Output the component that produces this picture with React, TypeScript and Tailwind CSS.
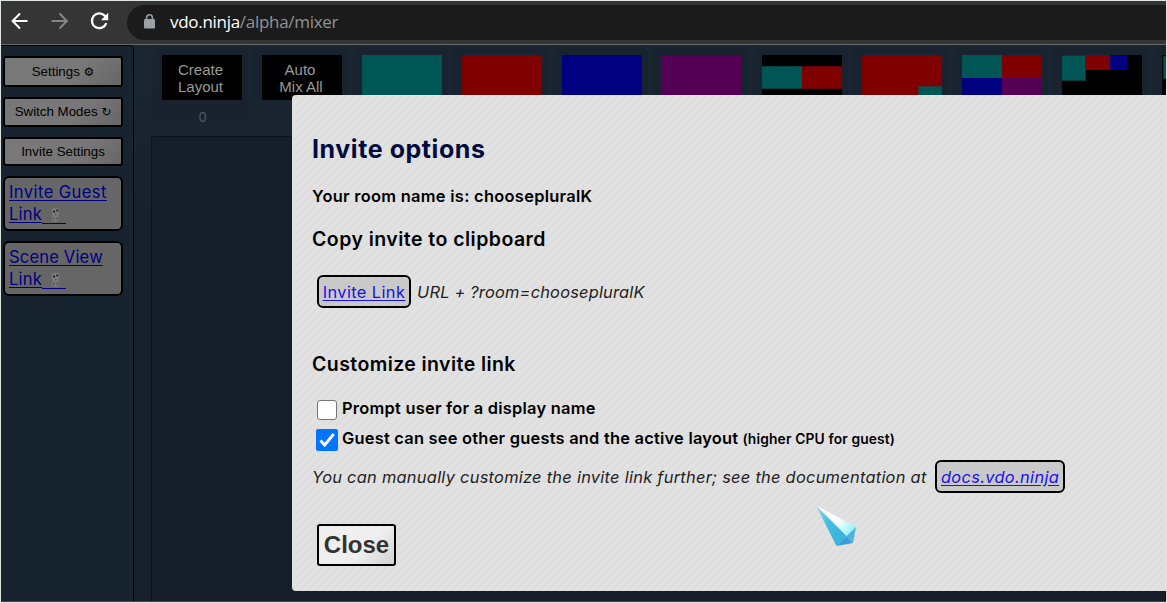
import type { ReactNode } from "react";

function BrowserBar() {
  return (
    <header className="flex h-[44px] shrink-0 items-center border-b border-[#686868] bg-[#353535]">
      <svg className="ml-2 h-6 w-6 shrink-0" viewBox="0 0 24 24" fill="none" stroke="#fff" strokeWidth="2" transform="translate(0 -2)">
        <path d="M18.500 12H3.500M11 4.500 3.600 12l7.400 7.500" />
      </svg>
      <svg className="ml-4 h-6 w-6 shrink-0" viewBox="0 0 24 24" fill="none" stroke="#858585" strokeWidth="2" transform="translate(0 -2)">
        <path d="M2.500 12H17.500M10.500 4.500 17.900 12l-7.400 7.500" />
      </svg>
      <svg className="ml-[14px] h-6 w-6 shrink-0" viewBox="0 0 24 24" fill="none" transform="translate(0 -2)">
        <path d="M19.300 14.200A7.400 7.400 0 1 1 17.600 6.600L19.500 8.500" stroke="#fff" strokeWidth="2.300" />
        <path d="M21.200 3.800V11.200H14z" fill="#fff" />
      </svg>
      <div className="-mt-px ml-4 flex h-[35px] flex-1 items-center rounded-l-full bg-[#1b1b1b] pl-[17px]">
        <svg className="-mt-px h-[15px] w-[11px] shrink-0" viewBox="0 0 11 15">
          <path d="M2.600 6V3.700a2.900 2.900 0 0 1 5.800 0V6" fill="none" stroke="#9aa0a6" strokeWidth="1.500" />
          <rect y="5" width="11" height="9.500" rx="1.300" fill="#9aa0a6" />
        </svg>
        <div className="-mt-px ml-[15px] font-['Open_Sans',sans-serif] text-[17px] leading-6 tracking-[-0.29px] text-[#8f9398]">
          <span className="text-white">vdo.ninja</span>/alpha/mixer
        </div>
      </div>
    </header>
  );
}

function SideButton({ children, className }: { children: ReactNode; className: string }) {
  return (
    <button className={`flex w-[120px] items-center justify-center rounded-[3px] border-2 border-black bg-[linear-gradient(135deg,#787878_60%,#666)] font-['Liberation_Sans','DejaVu_Sans',sans-serif] text-[13.33px] leading-4 whitespace-pre text-black ${className}`}>
      {children}
    </button>
  );
}

function Ghost() {
  return (
    <svg className="ml-[9px] inline-block h-4 w-[9px]" viewBox="0 0 9 16">
      <path d="M1.500 15V8L.5 4Q.5 1 4.500 1T8.500 4L7.500 8V15L6 13.500 4.500 15.500 3 13.500z" fill="#7c7c7c" />
      <circle cx="3" cy="4.500" r="1.100" fill="#181818" />
      <circle cx="6.300" cy="3.500" r="1.100" fill="#181818" />
      <path d="M4.700 6.500v2M3 10v3M6 10v3" stroke="#4c4c4c" />
    </svg>
  );
}

function SideLink({ first, className }: { first: string; className: string }) {
  return (
    <a className={`block h-[55px] w-[120px] rounded-[6px] border-2 border-black bg-[#666] pt-[3px] pl-1 font-['Inter',sans-serif] text-[16.6px] leading-[22px] whitespace-nowrap text-[#000084] underline underline-offset-2 ${className}`}>
      {first}
      <br />
      <span className="tracking-[0.2px]">Link</span>
      <span className="inline-flex border-b border-[#000084] pr-[6px] align-[-3px]"><Ghost /></span>
    </a>
  );
}

function Slot({ children, below }: { children?: ReactNode; below?: string }) {
  return (
    <div className="flex w-[95px] shrink-0 flex-col rounded-[7px] bg-[#18232f] px-[9px] pt-2">
      <div className="h-[45px] w-20 shrink-0 overflow-hidden bg-black text-center font-['Liberation_Sans',sans-serif] text-[15px] leading-[17px] text-[#999]">
        {children}
      </div>
      {below && <div className="mt-[9px] pl-1 text-center font-['Inter',sans-serif] text-[13px] leading-4 text-[#565b60]">{below}</div>}
    </div>
  );
}

function Layouts() {
  return (
    <div className="flex h-20 items-start gap-[5px] overflow-hidden pt-[2px] pl-[19px]">
      <Slot below="0"><div className="pt-[6px] pr-[3px]">Create<br />Layout</div></Slot>
      <Slot><div className="pt-[6px]"><span className="-ml-1">Auto</span><br /><span className="ml-[-2px]">Mix All</span></div></Slot>
      <Slot><div className="h-full bg-[#005555]" /></Slot>
      <Slot><div className="h-full bg-[#800000]" /></Slot>
      <Slot><div className="h-full bg-[#000080]" /></Slot>
      <Slot><div className="h-full bg-[#550055]" /></Slot>
      <Slot>
        <div className="flex pt-[11px]">
          <div className="h-[23px] w-10 border-y border-[#004040] bg-[#005555]" />
          <div className="h-[23px] w-10 border-y border-[#600000] bg-[#800000]" />
        </div>
      </Slot>
      <Slot>
        <div className="flex h-full items-end justify-end bg-[#800000]">
          <div className="h-[14px] w-6 border-t border-l border-[#303535] bg-[#005555]" />
        </div>
      </Slot>
      <Slot>
        <div className="grid h-full grid-cols-2 grid-rows-2">
          <div className="bg-[#005555]" /><div className="bg-[#800000]" />
          <div className="bg-[#000080]" /><div className="bg-[#550055]" />
        </div>
      </Slot>
      <Slot>
        <div className="flex items-start">
          <div className="h-[26px] w-6 border border-l-0 border-[#003c3c] bg-[#005555]" />
          <div className="h-[15px] w-6 bg-[#800000]" />
          <div className="h-[15px] w-[17px] bg-[#000080]" />
        </div>
      </Slot>
      <Slot><div className="mt-px ml-px h-[23px] w-6 border border-[#003c3c] bg-[#005555]" /></Slot>
    </div>
  );
}

function LinkBox({ children, className }: { children: ReactNode; className: string }) {
  return (
    <a className={`flex h-[33px] items-center justify-center rounded-[6px] border-2 border-black bg-[#c9c9c9] text-[#1a10e8] underline underline-offset-2 ${className}`}>
      {children}
    </a>
  );
}

function InviteDialog() {
  return (
    <section className="absolute top-[94px] right-0 left-[291px] h-[496px] rounded-l-[4px] bg-[repeating-linear-gradient(135deg,#e2e2e2_0px,#e2e2e2_2.83px,#dedede_2.83px,#dedede_5.66px)] pt-[38px] pl-5 font-['Inter',sans-serif] text-[16.4px] leading-6 whitespace-nowrap text-black">
      <h2 className="text-[25px] leading-8 font-bold tracking-[0.57px] text-[#000b3e]">Invite options</h2>
      <p className="mt-[19px] font-semibold tracking-[0.3px]">Your room name is: choosepluralK</p>
      <h3 className="mt-[19px] text-[19.5px] font-semibold tracking-[0.46px]">Copy invite to clipboard</h3>
      <div className="mt-6 ml-[5px] flex items-center">
        <LinkBox className="w-[94px] tracking-[0.4px]">Invite Link</LinkBox>
        <span className="ml-[6px] tracking-[0.2px] text-[#222] italic">URL + ?room=choosepluralK</span>
      </div>
      <h3 className="mt-11 text-[19.5px] font-semibold tracking-[0.42px]">Customize invite link</h3>
      <div className="mt-5 flex h-6 items-center font-semibold tracking-[0.26px]">
        <span className="mt-[3px] ml-[5px] h-5 w-5 rounded-[3px] border border-[#767676] bg-white" />
        <span className="ml-[5px]">Prompt user for a display name</span>
      </div>
      <div className="mt-[6px] flex h-6 items-center font-semibold tracking-[0.24px]">
        <svg className="mt-1 ml-1 h-[22px] w-[22px]" viewBox="0 0 22 22">
          <rect width="22" height="22" rx="2" fill="#0075ff" />
          <path d="m4.500 11.500 4.200 4.500 9-11" fill="none" stroke="#fff" strokeWidth="2.900" />
        </svg>
        <span className="ml-1">Guest can see other guests and the active layout</span>
        <span className="mt-px ml-1 text-[13.8px] tracking-[0.15px]">(higher CPU for guest)</span>
      </div>
      <div className="mt-[10px] flex items-center text-[#222] italic">
        <span className="w-[623px] tracking-[0.27px]">You can manually customize the invite link further; see the documentation at</span>
        <LinkBox className="w-[130px] tracking-[0.34px]">docs.vdo.ninja</LinkBox>
      </div>
      <button className="mt-[31px] ml-[5px] block h-[42px] w-[79px] rounded-[3px] border-2 border-black bg-[linear-gradient(135deg,#efefef_60%,#d2d2d2)] font-['Liberation_Sans',sans-serif] text-[24px] leading-[38px] font-bold text-[#333]">
        Close
      </button>
    </section>
  );
}

function Pointer() {
  return (
    <svg className="absolute top-[504px] left-[814px] h-[42px] w-[42px]" viewBox="0 0 42 42">
      <defs>
        <linearGradient id="lit" x1="0.300" y1="0.500" x2="1" y2="0.800"><stop offset="0.300" stopColor="#fff" /><stop offset="1" stopColor="#7ff5f5" /></linearGradient>
        <linearGradient id="shade" x1="0" y1="0" x2="0.500" y2="1"><stop offset="0" stopColor="#a5d8df" /><stop offset="0.500" stopColor="#45bce0" /><stop offset="1" stopColor="#3ab4df" /></linearGradient>
      </defs>
      <path d="M1 .5 41 22 31.500 31z" fill="url(#lit)" />
      <path d="M1 .5 31.500 31 21.500 41z" fill="url(#shade)" />
      <path d="m31.500 31 6.500 7-16.500 3z" fill="#359edb" />
      <path d="M41 22 38 38 31.500 31z" fill="#4fb4e2" />
    </svg>
  );
}

export default function App() {
  return (
    <div className="relative flex h-[603px] w-[1167px] flex-col overflow-hidden border border-[#dfe3e2] bg-[#1a2632]">
      <BrowserBar />
      <div className="flex min-h-0 flex-1 border-b border-[#3c4654]">
        <aside className="flex w-[133px] shrink-0 flex-col rounded-tr-[5px] border-t border-r border-black bg-[#182330] pt-[10px] pl-[2px]">
          <SideButton className="h-[31px] pt-px">Settings <span className="text-[12px]">⚙</span></SideButton>
          <SideButton className="mt-[10px] h-[30px]">Switch Modes <span className="text-[12px]">↻</span></SideButton>
          <SideButton className="mt-[10px] h-[29px]">Invite Settings</SideButton>
          <SideLink className="mt-[10px] tracking-[0.4px]" first="Invite Guest" />
          <SideLink className="mt-[10px] tracking-[0.15px]" first="Scene View" />
        </aside>
        <main className="flex min-w-0 flex-1 flex-col bg-[linear-gradient(#1a2733,#18212b_30%)]">
          <Layouts />
          <div className="mt-[11px] ml-[17px] flex-1 rounded-tl-[3px] border border-b-0 border-[#0c1219] bg-[#151d28]" />
        </main>
      </div>
      <InviteDialog />
      <Pointer />
    </div>
  );
}
